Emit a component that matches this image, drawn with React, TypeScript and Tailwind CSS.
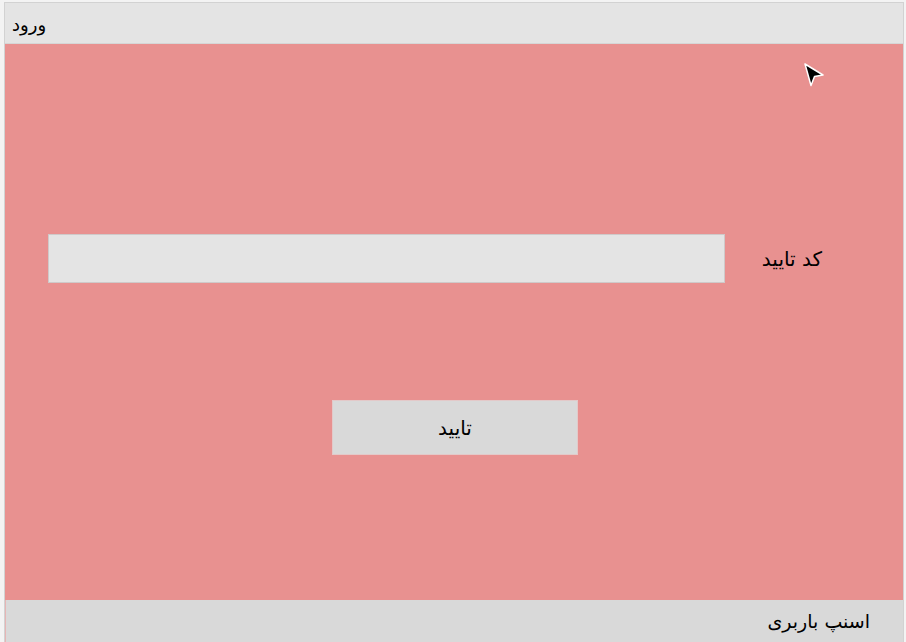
import React from "react";

const font = { fontFamily: '"DejaVu Sans", "Noto Sans", sans-serif' };

const Cursor = () => (
  <svg
    className="absolute left-[803px] top-[62px]"
    width="24"
    height="28"
    viewBox="0 0 24 28"
  >
    <path
      d="M2 2 L20 13 L11.5 14.5 L8 23.5 Z"
      fill="#000"
      stroke="#fff"
      strokeWidth="1.5"
      strokeLinejoin="round"
    />
  </svg>
);

const App = () => {
  return (
    <div
      className="relative h-[642px] w-[906px] bg-[#f3f3f3] pl-[4px] pr-[2px] pt-[2px] text-black"
      style={font}
    >
      <div className="flex h-full flex-col border-x border-t border-[#d2d2d2]">
        <header className="flex h-[41px] items-center border-b border-[#d6d6d6] bg-[#e4e4e4] px-[7px]">
          <span className="mt-[3px] text-[18px] leading-none" dir="rtl">
            ورود
          </span>
        </header>

        <main className="flex flex-1 flex-col bg-[#e89190]">
          <div className="mt-[190px] flex items-center pl-[43px] pr-[81px]">
            <input
              className="h-[49px] w-[677px] border border-[#cfc9c9] bg-[#e4e4e4] outline-none"
              type="text"
            />
            <label className="ml-auto text-[20px]" dir="rtl">
              کد تایید
            </label>
          </div>
          <div className="mt-[117px] flex justify-center pl-[2px]">
            <button className="h-[55px] w-[246px] border border-[#e3c9c9] bg-[#d9d9d9] text-[20px]">
              <span dir="rtl">تایید</span>
            </button>
          </div>
        </main>

        <footer className="flex h-[42px] items-center justify-end border-l border-[#e6b5b5] bg-[#d9d9d9] pr-[33px]">
          <span className="text-[19px]" dir="rtl">
            اسنپ باربری
          </span>
        </footer>
      </div>
      <Cursor />
    </div>
  );
};

export default App;
